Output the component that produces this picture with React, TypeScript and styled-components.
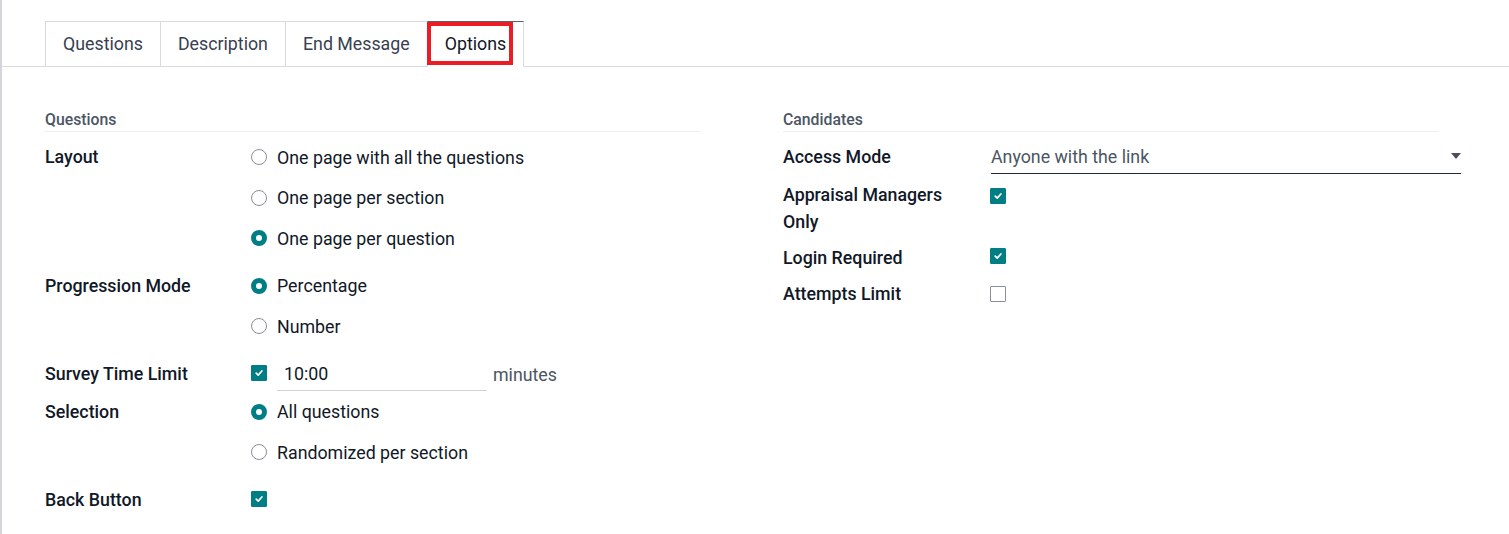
import * as React from "react";
import styled, { createGlobalStyle } from "styled-components";

const GlobalStyle = createGlobalStyle`
  html, body {
    margin: 0;
    padding: 0;
    background: #ffffff;
  }
  body {
    font-family: Roboto, "Noto Sans", "Liberation Sans", sans-serif;
    color: #111827;
  }
`;

const Page = styled.div`
  width: 1509px;
  height: 534px;
  border-left: 2px solid #d3d5da;
  box-sizing: border-box;
  overflow: hidden;
`;

const TabBar = styled.div`
  display: flex;
  padding: 21px 0 0 44px;
  border-bottom: 1px solid #d8dadd;
`;

const Tab = styled.div<{ $active?: boolean }>`
  position: relative;
  padding: 0 17px 2px;
  box-sizing: border-box;
  display: flex;
  align-items: center;
  font-size: 17.8px;
  color: ${(p) => (p.$active ? "#111827" : "#374151")};
  border: 1px solid #d8dadd;
  border-top-color: ${(p) => (p.$active ? "#5b616c" : "#d8dadd")};
  border-bottom: none;
  margin-left: -1px;
  margin-bottom: ${(p) => (p.$active ? "-1px" : "0")};
  height: ${(p) => (p.$active ? "46px" : "45px")};
  background: #ffffff;
`;

const Highlight = styled.div`
  position: absolute;
  left: -1px;
  top: 0;
  width: 86px;
  height: 43px;
  border: 4px solid #ec1c24;
  box-sizing: border-box;
  pointer-events: none;
`;

const Sheet = styled.div`
  display: grid;
  grid-template-columns: 655px 655px;
  column-gap: 83px;
  padding: 43px 0 0 43px;
`;

const Group = styled.div`
  display: flex;
  flex-direction: column;
`;

const GroupTitle = styled.div`
  font-size: 15.8px;
  font-weight: 500;
  color: #4b5563;
  padding-bottom: 1px;
  border-bottom: 1px solid #eceef1;
  margin-bottom: 5px;
  line-height: 20px;
`;

const Field = styled.div<{ $gap?: number }>`
  display: grid;
  grid-template-columns: 205px 1fr;
  margin-bottom: ${(p) => p.$gap ?? 0}px;
`;

const Label = styled.div<{ $pad?: number; $lh?: number }>`
  font-size: 17.8px;
  font-weight: 500;
  color: #111827;
  line-height: ${(p) => p.$lh ?? 25}px;
  padding: ${(p) => p.$pad ?? 7}px 0;
`;

const Options = styled.div`
  display: flex;
  flex-direction: column;
`;

const RadioRow = styled.label`
  display: flex;
  align-items: center;
  gap: 10px;
  height: 40.5px;
  font-size: 17.8px;
  color: #111827;
`;

const Radio = styled.span<{ $on?: boolean }>`
  width: 16px;
  height: 16px;
  border-radius: 50%;
  box-sizing: border-box;
  margin-left: 1px;
  flex: none;
  border: ${(p) => (p.$on ? "5px solid #017e84" : "1px solid #8a9099")};
  background: #ffffff;
`;

const Box = styled.span<{ $on?: boolean }>`
  width: 16px;
  height: 16px;
  box-sizing: border-box;
  border-radius: 1px;
  flex: none;
  display: inline-flex;
  align-items: center;
  justify-content: center;
  background: ${(p) => (p.$on ? "#017e84" : "#ffffff")};
  border: 1px solid ${(p) => (p.$on ? "#017e84" : "#8a9099")};
`;

const ValueCell = styled.div<{ $h?: number }>`
  display: flex;
  align-items: center;
  height: ${(p) => p.$h ?? 39}px;
  padding-left: 1px;
`;

const TimeInput = styled.div`
  margin-left: 10px;
  width: 203px;
  padding: 1px 0 5px 7px;
  margin-top: 7px;
  border-bottom: 1px solid #cfd2d6;
  font-size: 17.8px;
  color: #111827;
  line-height: 22px;
`;

const Unit = styled.span`
  margin-left: 6px;
  margin-top: 2px;
  font-size: 17.8px;
  color: #4b5563;
`;

const Select = styled.div`
  width: 470px;
  height: 37px;
  padding-top: 2px;
  margin-left: 3px;
  box-sizing: border-box;
  display: flex;
  align-items: center;
  justify-content: space-between;
  border-bottom: 1px solid #1f2937;
  font-size: 17.8px;
  color: #4b5563;
`;

const Caret = styled.span`
  width: 0;
  height: 0;
  border-left: 5px solid transparent;
  border-right: 5px solid transparent;
  border-top: 6px solid #4b5060;
`;

const BoxCell = styled.div<{ $top?: number }>`
  padding-top: ${(p) => p.$top ?? 10}px;
  padding-left: 2px;
`;

function Check() {
  return (
    <svg width="10" height="10" viewBox="0 0 10 10">
      <path
        d="M2.2 5.2 L4.2 7.1 L7.9 3"
        fill="none"
        stroke="#ffffff"
        strokeWidth="1.7"
        strokeLinecap="round"
        strokeLinejoin="round"
      />
    </svg>
  );
}

type Opt = { text: string; on?: boolean };

function RadioGroup({ items }: { items: Opt[] }) {
  return (
    <Options>
      {items.map((o) => (
        <RadioRow key={o.text}>
          <Radio $on={o.on} />
          {o.text}
        </RadioRow>
      ))}
    </Options>
  );
}

export default function App() {
  return (
    <>
      <GlobalStyle />
      <Page>
        <TabBar>
          <Tab>Questions</Tab>
          <Tab>Description</Tab>
          <Tab>End Message</Tab>
          <Tab $active>
            Options
            <Highlight />
          </Tab>
        </TabBar>
        <Sheet>
          <Group>
            <GroupTitle>Questions</GroupTitle>
            <Field $gap={7}>
              <Label>Layout</Label>
              <RadioGroup
                items={[
                  { text: "One page with all the questions" },
                  { text: "One page per section" },
                  { text: "One page per question", on: true },
                ]}
              />
            </Field>
            <Field $gap={8}>
              <Label>Progression Mode</Label>
              <RadioGroup items={[{ text: "Percentage", on: true }, { text: "Number" }]} />
            </Field>
            <Field>
              <Label $pad={6}>Survey Time Limit</Label>
              <ValueCell $h={37}>
                <Box $on>
                  <Check />
                </Box>
                <TimeInput>10:00</TimeInput>
                <Unit>minutes</Unit>
              </ValueCell>
            </Field>
            <Field $gap={7}>
              <Label>Selection</Label>
              <RadioGroup items={[{ text: "All questions", on: true }, { text: "Randomized per section" }]} />
            </Field>
            <Field>
              <Label>Back Button</Label>
              <ValueCell>
                <Box $on>
                  <Check />
                </Box>
              </ValueCell>
            </Field>
          </Group>
          <Group>
            <GroupTitle>Candidates</GroupTitle>
            <Field>
              <Label>Access Mode</Label>
              <Select>
                Anyone with the link
                <Caret />
              </Select>
            </Field>
            <Field>
              <Label $pad={5} $lh={27}>
                Appraisal Managers
                <br />
                Only
              </Label>
              <BoxCell>
                <Box $on>
                  <Check />
                </Box>
              </BoxCell>
            </Field>
            <Field>
              <Label $pad={5}>Login Required</Label>
              <BoxCell $top={6}>
                <Box $on>
                  <Check />
                </Box>
              </BoxCell>
            </Field>
            <Field>
              <Label $pad={6}>Attempts Limit</Label>
              <BoxCell $top={11}>
                <Box />
              </BoxCell>
            </Field>
          </Group>
        </Sheet>
      </Page>
    </>
  );
}
